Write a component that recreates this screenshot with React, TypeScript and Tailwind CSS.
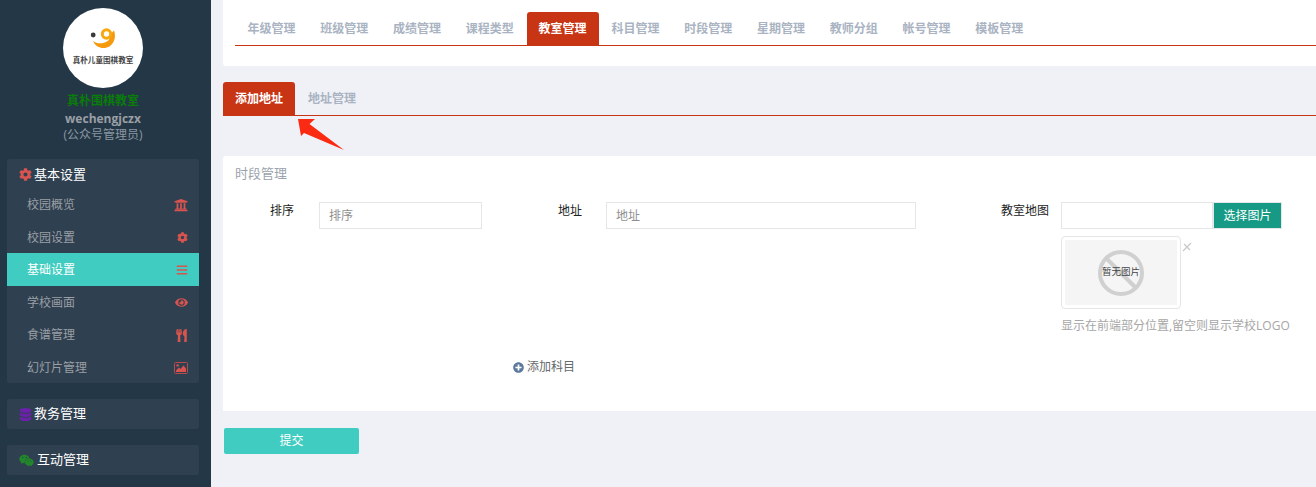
import React from "react";
import { FaCog, FaUniversity, FaBars, FaEye, FaUtensils, FaDatabase, FaWeixin, FaPlusCircle } from "react-icons/fa";

const font = '"Open Sans","Noto Sans CJK SC",sans-serif';

const topTabs = ["年级管理", "班级管理", "成绩管理", "课程类型", "教室管理", "科目管理", "时段管理", "星期管理", "教师分组", "帐号管理", "模板管理"];

function PictureIcon() {
  return (
    <svg width="14" height="12" viewBox="0 0 14 12" className="block">
      <rect x="0.5" y="0.5" width="13" height="11" rx="1" fill="none" stroke="#b84a4d" strokeWidth="1" />
      <path d="M2 10 L2 8.5 L5 5.5 L6.5 7 L9.5 3.5 L12 6.5 L12 10 Z" fill="#d9534f" />
      <circle cx="3.6" cy="3.4" r="1.2" fill="#d9534f" />
    </svg>
  );
}

const items = [
  { t: "校园概览", i: <FaUniversity className="text-[14px]" /> },
  { t: "校园设置", i: <FaCog className="text-[11px]" /> },
  { t: "基础设置", i: <FaBars className="text-[12px]" />, active: true },
  { t: "学校画面", i: <FaEye className="text-[13px]" /> },
  { t: "食谱管理", i: <FaUtensils className="text-[13px]" /> },
  { t: "幻灯片管理", i: <PictureIcon /> },
];

function Tab({ label, active, width }: { label: string; active?: boolean; width: string }) {
  return (
    <div className={`${width} h-[33px] flex items-center justify-start pl-3 rounded-t-[3px] text-[12px] font-bold ${active ? "bg-[#c83515] text-white" : "text-[#a9b3c2]"}`}>
      {label}
    </div>
  );
}

function Logo() {
  return (
    <div className="w-20 h-20 rounded-full bg-white flex flex-col items-center">
      <svg width="26" height="24" viewBox="0 0 26 24" className="mt-[19px]">
        <circle cx="3.2" cy="8" r="2.4" fill="#3a3a3a" />
        <path d="M3 14 C7 17 13 17 17 14.5 C19.5 13 20.5 10 20 7.5 L24 3.5 C26 9 25 15 20 19 C14 23 6 21 3 14 Z" fill="#f59a0c" />
        <circle cx="16.5" cy="7" r="4.2" fill="none" stroke="#f7a70f" strokeWidth="3" />
      </svg>
      <span className="text-[7.6px] font-bold leading-[10px] mt-[4px] text-[#444] whitespace-nowrap">真朴儿童围棋教室</span>
    </div>
  );
}

function Group({ icon, title, gap }: { icon: React.ReactNode; title: string; gap: string }) {
  return (
    <div className="ml-[7px] w-[192px] mt-4 h-[30px] bg-[#2f4050] rounded-[2px] flex items-center pl-[12px] text-white text-[13px]">
      {icon}
      <span className={gap}>{title}</span>
    </div>
  );
}

function Sidebar() {
  return (
    <aside className="w-[211px] shrink-0 bg-[#243746] h-[487px]">
      <div className="flex flex-col items-center pt-2 pr-[5px]">
        <Logo />
        <div className="mt-[3px] text-[12px] font-bold text-[#0a7c0a] leading-[19px]">真朴围棋教室</div>
        <div className="text-[12px] font-bold text-[#9a9fa5] leading-[17px]">wechengjczx</div>
        <div className="text-[12px] text-[#8b97a3] leading-[15px]">(公众号管理员)</div>
      </div>
      <div className="ml-[7px] w-[192px] mt-[17px] bg-[#2f4050] rounded-[2px]">
        <div className="h-[29px] pt-[2px] flex items-center pl-[12px] text-white text-[13px]">
          <FaCog className="text-[13px] text-[#d9534f]" />
          <span className="ml-[2px]">基本设置</span>
        </div>
        <div>
          {items.map((it) => (
            <div
              key={it.t}
              className={`h-[32.5px] pt-[2px] flex items-center justify-between pl-5 pr-[11px] text-[12px] ${it.active ? "bg-[#40ccc0] text-white" : "text-[#9a9fa5]"}`}
            >
              <span>{it.t}</span>
              <span className="text-[#d9534f]">{it.i}</span>
            </div>
          ))}
        </div>
      </div>
      <Group icon={<FaDatabase className="text-[13px] text-[#6a22a8]" />} title="教务管理" gap="ml-[2px]" />
      <Group icon={<FaWeixin className="text-[15px] text-[#22862a]" />} title="互动管理" gap="ml-[3px]" />
    </aside>
  );
}

function Field({ label, children, labelW, className }: { label: string; children: React.ReactNode; labelW: string; className?: string }) {
  return (
    <div className={`flex items-start ${className ?? ""}`}>
      <div className={`${labelW} text-[12px] leading-[18px] text-[#222]`}>{label}</div>
      {children}
    </div>
  );
}

const inputCls = "h-[27px] border border-[#e5e6e7] bg-white px-[9px] text-[12px] outline-none placeholder:text-[#8f8f8f]";

export default function App() {
  return (
    <div className="flex w-[1316px] h-[487px] overflow-hidden bg-[#f0f1f7]" style={{ fontFamily: font }}>
      <Sidebar />
      <main className="flex-1 pl-3">
        <section className="h-[66px] bg-white rounded-bl-[3px] pt-3 pl-3 pr-5">
          <div className="flex pl-[0.4px] border-b border-[#c83515] w-[1081px] h-[34px]">
            {topTabs.map((t) => (
              <Tab key={t} label={t} active={t === "教室管理"} width="w-[72.8px]" />
            ))}
          </div>
        </section>

        <div className="relative mt-4 flex gap-px border-b border-[#c83515] h-[34px]">
          <Tab label="添加地址" active width="w-[72px]" />
          <Tab label="地址管理" width="w-[72px]" />
          <svg className="absolute left-[72px] top-[36px]" width="52" height="34" viewBox="0 0 52 34">
            <path d="M3 1 L20 1 L14.5 6 L49 32 L9 15 L6 18 Z" fill="#fb2a13" />
          </svg>
        </div>

        <section className="mt-[40px] h-[255px] bg-white rounded-tl-[3px] pt-[8px]">
          <h3 className="ml-3 text-[13px] leading-[19px] text-[#9aa3ad] font-normal">时段管理</h3>
          <div className="flex mt-[19px]">
            <Field label="排序" labelW="ml-[47px] w-[49px]">
              <input placeholder="排序" className={`${inputCls} w-[163px]`} />
            </Field>
            <Field label="地址" labelW="ml-[76px] w-[48px]">
              <input placeholder="地址" className={`${inputCls} w-[310px]`} />
            </Field>
            <Field label="教室地图" labelW="ml-[85px] w-[60px]">
              <div className="flex flex-col">
                <div className="flex">
                  <input className={`${inputCls} w-[152px]`} />
                  <button className="w-[69px] h-[27px] bg-[#169a85] border border-[#e5e6e7] text-white text-[12px]">选择图片</button>
                </div>
                <div className="relative mt-[7px] w-[120px] h-[73px] border border-[#e5e6e7] rounded-[4px] p-[3px]">
                  <div className="relative w-full h-full bg-[#f5f5f5] flex items-center justify-center">
                    <svg className="absolute" width="46" height="46" viewBox="0 0 46 46">
                      <circle cx="23" cy="23" r="21" fill="none" stroke="#d0d0d0" strokeWidth="4" />
                      <path d="M8 8 L38 38" stroke="#d0d0d0" strokeWidth="4" />
                    </svg>
                    <span className="relative text-[9.5px] text-[#444]">暂无图片</span>
                  </div>
                  <svg className="absolute left-[120px] top-[5px]" width="10" height="10" viewBox="0 0 10 10">
                    <path d="M1 9 L9 1 M2 2 L8 8" stroke="#c8c8c8" strokeWidth="1.2" />
                  </svg>
                </div>
                <p className="mt-[8px] text-[12px] leading-[18px] text-[#a6a6a6] whitespace-nowrap">显示在前端部分位置,留空则显示学校LOGO</p>
              </div>
            </Field>
          </div>
          <div className="ml-[290px] mt-[23px] flex items-center gap-[3px] text-[12px] leading-[18px] text-[#676a6c]">
            <FaPlusCircle className="text-[11px] text-[#5d7a9c]" />
            <span>添加科目</span>
          </div>
        </section>

        <button className="ml-px mt-[17px] block w-[135px] h-[26px] rounded-[2px] bg-[#40ccc0] text-white text-[12px]">提交</button>
      </main>
    </div>
  );
}
